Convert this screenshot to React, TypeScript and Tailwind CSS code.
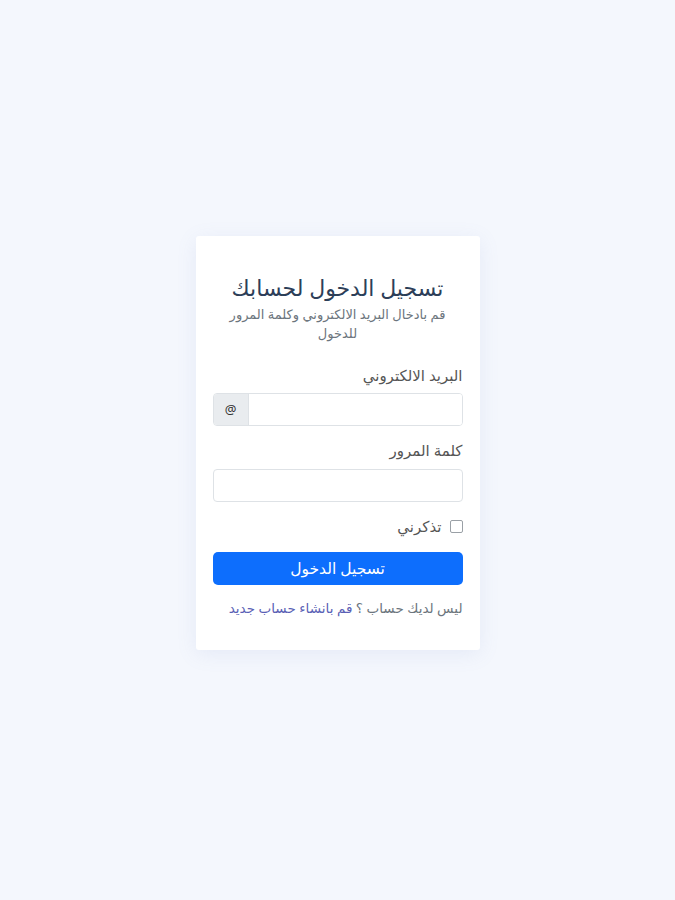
import React from "react";

export default function App() {
  return (
    <div
      dir="rtl"
      className="min-h-[900px] w-full bg-[#f4f7fd] flex items-start justify-center pt-[236px]"
      style={{ fontFamily: '"Noto Sans", "DejaVu Sans", sans-serif' }}
    >
      <div className="w-[284px] bg-white rounded-[3px] shadow-[0_4px_20px_rgba(120,140,200,0.12)] px-[17px] pt-[36px] pb-[32px]">
        <h1 className="text-center text-[22px] leading-[30px] text-[#2c3e58] font-normal">
          تسجيل الدخول لحسابك
        </h1>
        <p className="text-center text-[13px] leading-[19px] text-[#6c757d] mx-auto w-[240px] mt-[3px]">
          قم بادخال البريد الالكتروني وكلمة المرور للدخول
        </p>

        <div className="mt-[21px]">
          <label className="block text-[15px] leading-[22px] text-[#555] mb-[7px]">
            البريد الالكتروني
          </label>
          <div className="flex h-[33px] border border-[#dee2e6] rounded-[4px] overflow-hidden">
            <input type="email" className="flex-1 min-w-0 px-2 outline-none bg-white" />
            <span className="w-[35px] flex items-center justify-center bg-[#e9ecef] border-r border-[#dee2e6] text-[13px] text-[#333]">
              @
            </span>
          </div>
        </div>

        <div className="mt-[13px]">
          <label className="block text-[15px] leading-[22px] text-[#555] mb-[8px]">
            كلمة المرور
          </label>
          <input
            type="password"
            className="block w-full h-[33px] border border-[#dee2e6] rounded-[4px] px-2 outline-none"
          />
        </div>

        <div className="mt-[13px] flex items-center gap-[8px]">
          <span className="w-[13px] h-[13px] border border-[#9aa0a6] rounded-[2px] bg-white" />
          <span className="text-[15px] leading-[22px] text-[#555]">تذكرني</span>
        </div>

        <button className="mt-[15px] w-full h-[33px] rounded-[5px] bg-[#0d6efd] text-white text-[15.5px]">
          تسجيل الدخول
        </button>

        <p className="mt-[13px] text-[13.5px] leading-[20px] text-[#6c757d]">
          ليس لديك حساب ؟ <span className="text-[#5a5fb5]">قم بانشاء حساب جديد</span>
        </p>
      </div>
    </div>
  );
}
